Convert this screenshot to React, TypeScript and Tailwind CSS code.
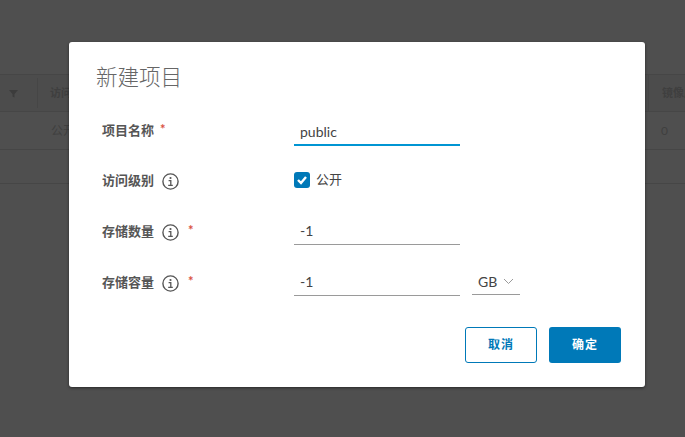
const cjk = 'font-["Lato","Noto_Sans_CJK_SC",sans-serif]';

function InfoIcon() {
  return (
    <svg className="w-[17px] h-[17px] text-[#565656]" viewBox="0 0 17 17" fill="none" stroke="currentColor">
      <circle cx="8.5" cy="8.5" r="7.6" strokeWidth="1.4" />
      <circle cx="8.5" cy="5" r="1.1" fill="currentColor" stroke="none" />
      <path d="M6.6 7.6h2.2v4.6M6.2 12.4h4.6" strokeWidth="1.3" />
    </svg>
  );
}

function Required() {
  return <span className="text-[#d9503f] text-[13px] font-bold leading-none ml-[6px] -mt-[3px]">*</span>;
}

function Label({ text, info, required }: { text: string; info?: boolean; required?: boolean }) {
  return (
    <div className="w-[225px] pl-[33px] flex items-center text-[13px] font-bold text-[#565656]">
      <span className={info ? 'mr-[8px] -mt-[1px]' : ''}>{text}</span>
      {info && <InfoIcon />}
      {required && <span className={info ? 'ml-[3px] flex' : 'flex'}><Required /></span>}
    </div>
  );
}

function TextInput({ value, focused }: { value: string; focused?: boolean }) {
  return (
    <div
      className={`w-[166px] pl-[6px] flex items-center text-[14px] text-[#444] ${
        focused ? 'h-[28px] border-b-2 border-[#0095d3]' : 'h-[26px] pb-[2px] border-b border-[#9a9a9a]'
      }`}
    >
      {value}
    </div>
  );
}

export default function App() {
  return (
    <div className={`relative w-[685px] h-[437px] overflow-hidden bg-[#4f4f4f] ${cjk}`}>
      {/* table behind the scrim */}
      <div className="pt-[74px] text-[11px] font-bold text-[#3f3f3f]">
        <div className="h-[38px] border-y border-[#464646] bg-[#4c4c4c] flex items-center">
          <svg className="ml-[9px] w-[9px] h-[9px] text-[#3c3c3c]" viewBox="0 0 9 9" fill="currentColor">
            <path d="M0 1h9L5.5 5v3.5L3.5 7.5V5z" />
          </svg>
          <div className="ml-[19px] h-[30px] w-px bg-[#464646]" />
          <span className="ml-[12px]">访问</span>
          <div className="ml-auto h-[36px] w-px bg-[#464646]" />
          <span className="ml-[13px] w-[23px] whitespace-nowrap overflow-hidden">镜像库</span>
        </div>
        <div className="h-[38px] border-b border-[#464646] flex items-center font-normal text-[12px]">
          <span className="ml-[51px]">公开</span>
          <span className="ml-auto mr-[15px] w-[9px]">0</span>
        </div>
        <div className="h-[34px] border-b border-[#464646]" />
      </div>

      {/* modal */}
      <div className="absolute left-[69px] top-[42px] w-[576px] h-[345px] bg-white rounded-[3px] shadow-[0_1px_3px_rgba(0,0,0,0.5)]">
        <h3 className="pl-[27px] pt-[20px] h-[77px] text-[21.5px] leading-[30px] font-extralight text-[#666666]">新建项目</h3>

        <div className="flex h-[24px] items-center">
          <Label text="项目名称" required />
          <div className="pt-[2px]">
            <TextInput value="public" focused />
          </div>
        </div>

        <div className="flex h-[24px] mt-[26px] items-center">
          <Label text="访问级别" info />
          <div className="flex items-center text-[13px] text-[#444] -mt-[2px]">
            <span className="w-[16px] h-[16px] rounded-[3px] bg-[#0079b8] flex items-center justify-center">
              <svg className="w-[10px] h-[10px]" viewBox="0 0 10 10" fill="none" stroke="white" strokeWidth="2.4">
                <path d="M1 5l3 3 5-6" />
              </svg>
            </span>
            <span className="ml-[6px]">公开</span>
          </div>
        </div>

        <div className="flex h-[24px] mt-[27px] items-center">
          <Label text="存储数量" info required />
          <TextInput value="-1" />
        </div>

        <div className="flex h-[24px] mt-[27px] items-center">
          <Label text="存储容量" info required />
          <div className="flex items-end -mt-[2px]">
            <TextInput value="-1" />
            <div className="ml-[12px] mb-[1px] w-[48px] h-[26px] pl-[6px] border-b border-[#9a9a9a] flex items-center text-[14px] text-[#444]">
              GB
              <svg className="ml-[6px] w-[11px] h-[7px] text-[#9a9a9a]" viewBox="0 0 11 7" fill="none" stroke="currentColor">
                <path d="M1 1l4.5 4.5L10 1" />
              </svg>
            </div>
          </div>
        </div>

        <div className="flex justify-end gap-[12px] pr-[24px] mt-[32px]">
          <button className="w-[72px] h-[36px] rounded-[3px] border border-[#0079b8] text-[#0079b8] text-[12px] font-bold tracking-[1px]">
            取消
          </button>
          <button className="w-[72px] h-[36px] rounded-[3px] bg-[#0079b8] text-white text-[12px] font-bold tracking-[1px]">
            确定
          </button>
        </div>
      </div>
    </div>
  );
}
